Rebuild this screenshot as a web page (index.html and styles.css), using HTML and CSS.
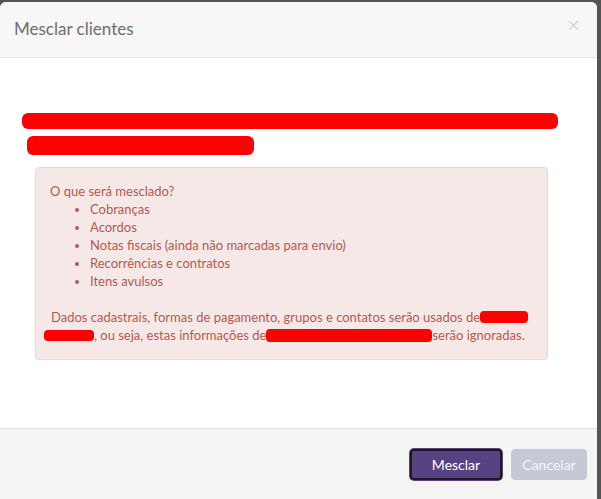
FILE: index.html
```html
<!DOCTYPE html>
<html lang="pt-BR">
<head>
<meta charset="utf-8">
<title>Mesclar clientes</title>
<link rel="stylesheet" href="styles.css">
</head>
<body>
<div class="modal">
  <div class="modal-header">
    <h4 class="modal-title">Mesclar clientes</h4>
    <span class="close">&times;</span>
  </div>
  <div class="modal-body">
    <div class="redacted-heading">
      <span class="redact redact-1"></span>
      <span class="redact redact-2"></span>
    </div>
    <div class="alert">
      <p class="alert-title">O que será mesclado?</p>
      <ul class="alert-list">
        <li>Cobranças</li>
        <li>Acordos</li>
        <li>Notas fiscais (ainda não marcadas para envio)</li>
        <li>Recorrências e contratos</li>
        <li>Itens avulsos</li>
      </ul>
      <p class="alert-note">Dados cadastrais, formas de pagamento, grupos e contatos serão usados de<span class="redact inline-a"></span><br><span class="redact inline-b"></span>, ou seja, estas informações de<span class="redact inline-c"></span>serão ignoradas.</p>
    </div>
  </div>
  <div class="modal-footer">
    <button class="btn btn-primary">Mesclar</button>
    <button class="btn btn-disabled">Cancelar</button>
  </div>
</div>
</body>
</html>
```
FILE: styles.css
```css
html, body {
  margin: 0;
  padding: 0;
  background: #545454;
  font-family: Lato, "Open Sans", sans-serif;
}
.modal {
  margin-top: 2px;
  width: 597px;
  height: 497px;
  background: #fff;
  border-radius: 6px 6px 0 0;
  display: flex;
  flex-direction: column;
  overflow: hidden;
}
.modal-header {
  height: 55px;
  background: #f7f7f7;
  border-bottom: 1px solid #e5e5e5;
  display: flex;
  align-items: center;
  justify-content: space-between;
  padding: 0 16px 0 14px;
  box-sizing: content-box;
}
.modal-title {
  margin: 0 0 3px 0;
  font-size: 17px;
  font-weight: 400;
  color: #6e6e6e;
}
.close {
  font-size: 18px;
  color: #c8c8c8;
  line-height: 1;
  margin-top: -10px;
  font-family: "DejaVu Sans", sans-serif;
  font-weight: 300;
}
.modal-body {
  flex: 1;
  padding: 0 0 0 35px;
}
.redacted-heading {
  display: flex;
  flex-direction: column;
  margin-left: -13px;
  padding-top: 55px;
  gap: 7px;
}
.redact {
  display: inline-block;
  background: #ff0000;
}
.redact-1 {
  width: 536px;
  height: 16px;
  border-radius: 6px;
}
.redact-2 {
  width: 227px;
  height: 19px;
  border-radius: 6px;
  margin-left: 5px;
}
.alert {
  margin-top: 12px;
  width: 513px;
  height: 193px;
  box-sizing: border-box;
  background: #f6e8e7;
  border: 1px solid #f0d4d4;
  border-radius: 4px;
  color: #b55a50;
  font-size: 13px;
  line-height: 18px;
  padding: 14px 4px 0 14px;
}
.alert-title {
  margin: 0;
}
.alert-list {
  margin: 0;
  padding-left: 40px;
}
.alert-note {
  margin: 18px 0 0 0;
  padding-left: 1px;
  white-space: nowrap;
}
.inline-a {
  width: 48px;
  height: 12px;
  border-radius: 4px;
  vertical-align: -1px;
}
.inline-b {
  width: 50px;
  height: 11px;
  border-radius: 4px;
  margin-left: -7px;
  vertical-align: -1px;
}
.inline-c {
  width: 166px;
  height: 13px;
  border-radius: 4px;
  vertical-align: -2px;
}
.modal-footer {
  height: 71px;
  background: #f5f5f5;
  border-top: 1px solid #e2e2e2;
  display: flex;
  justify-content: flex-end;
  align-items: flex-start;
  gap: 9px;
  padding: 20px 10px 0 0;
  box-sizing: border-box;
}
.btn {
  height: 31px;
  font-family: Lato, "Open Sans", sans-serif;
  font-size: 14px;
  border-radius: 4px;
  color: #fff;
  cursor: pointer;
}
.btn-primary {
  width: 92px;
  background: #574284;
  border: 2px solid #1b1b1b;
  box-shadow: 0 0 0 1px #574284;
}
.btn-disabled {
  width: 76px;
  background: #c5c9d6;
  border: 1px solid #c5c9d6;
  color: #f3f4f7;
}
```
